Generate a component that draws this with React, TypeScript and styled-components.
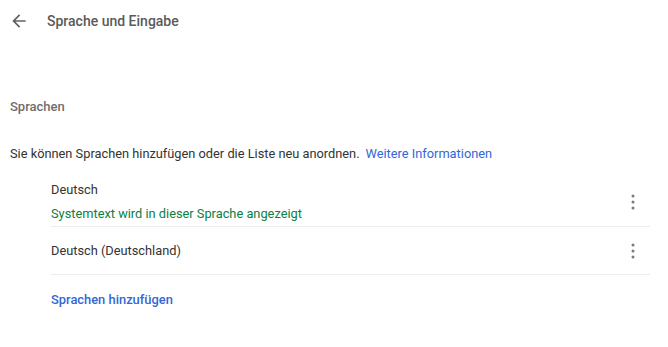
import React from "react";
import styled, { createGlobalStyle } from "styled-components";

const Global = createGlobalStyle`
  html, body { margin: 0; padding: 0; background: #fff; }
  body { font-family: Roboto, "Noto Sans", sans-serif; color: #333; -webkit-font-smoothing: antialiased; }
`;

const Page = styled.div`
  width: 668px;
  height: 347px;
  display: flex;
  flex-direction: column;
`;

const Header = styled.div`
  height: 42px;
  display: flex;
  align-items: center;
  padding-left: 9px;
`;

const BackButton = styled.button`
  width: 20px;
  height: 20px;
  padding: 0;
  border: none;
  background: none;
  display: flex;
  align-items: center;
  justify-content: center;
  color: #5f6368;
`;

const Title = styled.h1`
  margin: 0 0 0 18px;
  font-size: 14px;
  line-height: 20px;
  font-weight: 500;
  color: #5a5a5a;
`;

const SectionTitle = styled.h2`
  margin: 55px 0 0 10px;
  font-size: 13px;
  line-height: 20px;
  font-weight: 500;
  color: #6e6e6e;
`;

const Description = styled.p`
  margin: 27px 0 0 10px;
  font-size: 12.8px;
  line-height: 20px;
  color: #333;
`;

const Link = styled.a`
  color: #3367d6;
  text-decoration: none;
  margin-left: 6px;
`;

const List = styled.div`
  margin: 0 18px 0 51px;
  display: flex;
  flex-direction: column;
`;

const Row = styled.div<{ $top: number; $bottom: number }>`
  display: flex;
  align-items: center;
  padding: ${(p) => p.$top}px 0 ${(p) => p.$bottom}px;
  border-bottom: 1px solid #ececec;
`;

const RowText = styled.div`
  flex: 1;
  display: flex;
  flex-direction: column;
  gap: 4px;
`;

const Primary = styled.div`
  font-size: 12.8px;
  line-height: 20px;
  color: #333;
`;

const Secondary = styled.div`
  font-size: 12.8px;
  line-height: 20px;
  color: #0b8043;
`;

const MoreButton = styled.button`
  width: 20px;
  height: 20px;
  padding: 0;
  margin-right: 7px;
  border: none;
  background: none;
  display: flex;
  align-items: center;
  justify-content: center;
  color: #7a7a7a;
`;

const AddLink = styled.a`
  margin: 15px 0 0 51px;
  font-size: 12.9px;
  line-height: 20px;
  font-weight: 500;
  color: #3367d6;
  text-decoration: none;
  align-self: flex-start;
`;

const ArrowBack = () => (
  <svg width="20" height="20" viewBox="0 0 24 24" fill="currentColor">
    <path d="M20 11H7.83l5.59-5.59L12 4l-8 8 8 8 1.41-1.41L7.83 13H20v-2z" />
  </svg>
);

const MoreVert = () => (
  <svg width="20" height="20" viewBox="0 0 20 20" fill="currentColor">
    <circle cx="10" cy="4" r="1.5" />
    <circle cx="10" cy="10" r="1.5" />
    <circle cx="10" cy="16" r="1.5" />
  </svg>
);

export default function App() {
  return (
    <>
      <Global />
      <Page>
        <Header>
          <BackButton aria-label="Zurück">
            <ArrowBack />
          </BackButton>
          <Title>Sprache und Eingabe</Title>
        </Header>
        <SectionTitle>Sprachen</SectionTitle>
        <Description>
          Sie können Sprachen hinzufügen oder die Liste neu anordnen.
          <Link href="#">Weitere Informationen</Link>
        </Description>
        <List>
          <Row $top={16} $bottom={2}>
            <RowText>
              <Primary>Deutsch</Primary>
              <Secondary>Systemtext wird in dieser Sprache angezeigt</Secondary>
            </RowText>
            <MoreButton aria-label="Mehr">
              <MoreVert />
            </MoreButton>
          </Row>
          <Row $top={14} $bottom={13}>
            <RowText>
              <Primary>Deutsch (Deutschland)</Primary>
            </RowText>
            <MoreButton aria-label="Mehr">
              <MoreVert />
            </MoreButton>
          </Row>
        </List>
        <AddLink href="#">Sprachen hinzufügen</AddLink>
      </Page>
    </>
  );
}
